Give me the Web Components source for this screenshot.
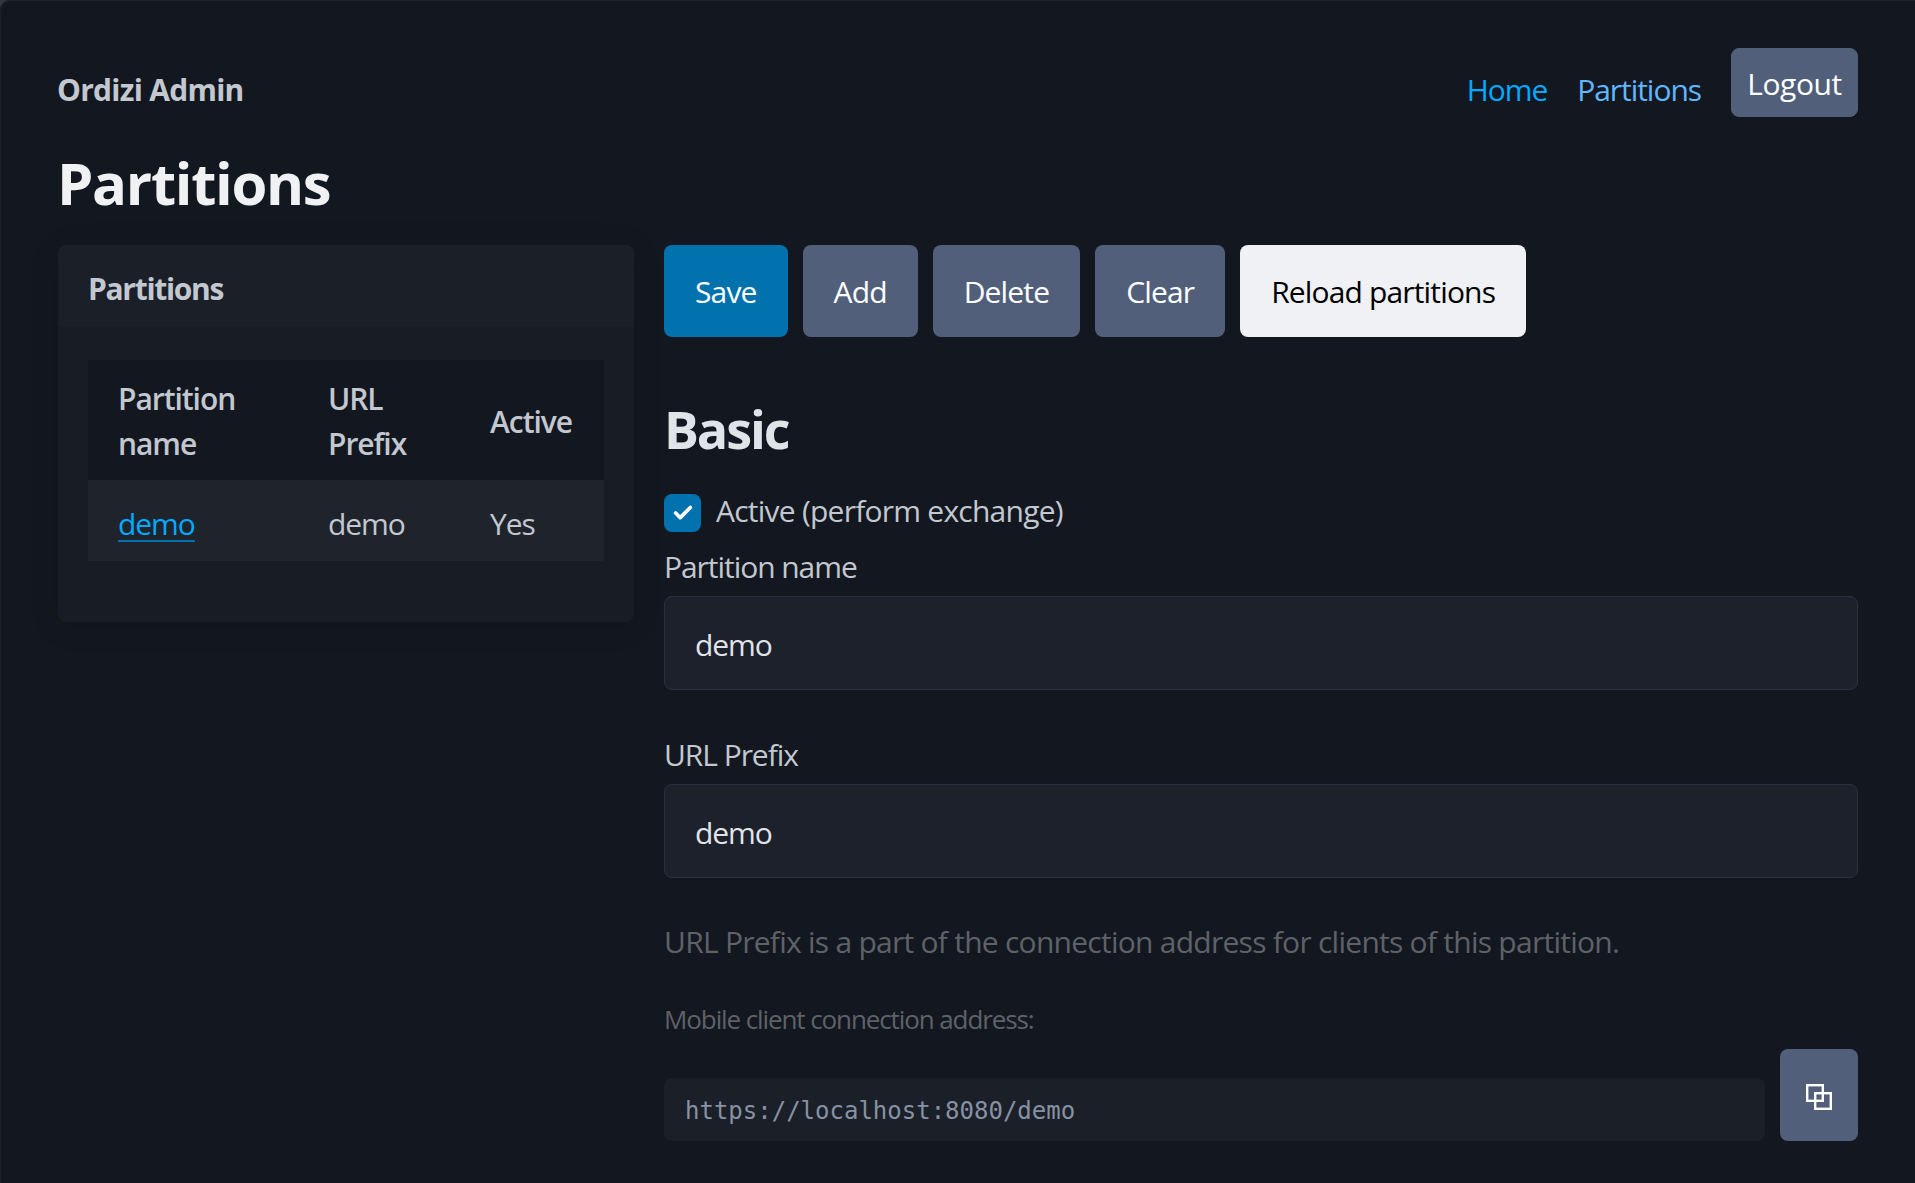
<!DOCTYPE html>
<html lang="en">
<head>
<meta charset="utf-8">
<title>Ordizi Admin</title>
<style>
  html { background: #33363b; }
  body {
    margin: 0;
    font-family: "Open Sans", "Noto Sans", sans-serif;
    font-size: 30px;
    line-height: 45px;
    color: #c2c7d0;
    letter-spacing: -1.05px;
  }
  app-shell {
    display: block;
    min-height: 100vh;
    background: #13171f;
    border-top-left-radius: 10px;
    box-shadow: inset 1px 1px 0 #1c2027;
  }
</style>
</head>
<body>
<app-shell>
  <top-nav brand="Ordizi Admin"></top-nav>
  <page-title>Partitions</page-title>
  <two-cols>
    <side-card slot="side" heading="Partitions">
      <partition-table></partition-table>
    </side-card>
    <div slot="main">
      <action-bar></action-bar>
      <section-title>Basic</section-title>
      <check-row>Active (perform exchange)</check-row>
      <text-field label="Partition name" value="demo"></text-field>
      <text-field label="URL Prefix" value="demo"></text-field>
      <hint-text>URL Prefix is a part of the connection address for clients of this partition.</hint-text>
      <address-row label="Mobile client connection address:" value="https://localhost:8080/demo"></address-row>
    </div>
  </two-cols>
</app-shell>

<script>
const define = (name, html, setup) => {
  customElements.define(name, class extends HTMLElement {
    constructor() {
      super();
      this.attachShadow({ mode: 'open' }).innerHTML = html;
    }
    connectedCallback() {
      if (setup) setup(this, this.shadowRoot);
    }
  });
};

define('app-shell', `<slot></slot>`);

define('top-nav', `
  <style>
    :host { display: flex; align-items: flex-start; justify-content: space-between; height: 157px; padding: 48px 57px 0 57px; box-sizing: border-box; }
    .brand { font-weight: 700; margin-top: 19px; letter-spacing: -0.72px; }
    nav { display: flex; gap: 30px; }
    a { color: #01aaff; text-decoration: none; margin-top: 19px; }
    a.hover { color: #5fb8ff; }
    button {
      font: inherit; letter-spacing: -0.45px; color: #fff; background: #525f7a; border: 1px solid #525f7a;
      border-radius: 8px; height: 69px; width: 127px; padding: 2px 0 0; box-sizing: border-box;
    }
  </style>
  <div class="brand"></div>
  <nav>
    <a href="#">Home</a>
    <a href="#" class="hover">Partitions</a>
    <button type="button">Logout</button>
  </nav>
`, (el, root) => { root.querySelector('.brand').textContent = el.getAttribute('brand'); });

define('page-title', `
  <style>
    :host { display: block; padding-left: 57px; height: 88px; color: #f0f1f3; font-size: 58px; line-height: 52px; font-weight: 700; letter-spacing: -1.3px; }
  </style>
  <slot></slot>
`);

define('two-cols', `
  <style>
    :host { display: grid; grid-template-columns: 576px 1fr; column-gap: 30px; padding: 0 57px 0 58px; }
  </style>
  <slot name="side"></slot>
  <slot name="main"></slot>
`);

define('side-card', `
  <style>
    :host { display: block; align-self: start; height: 377px; background: #181c25; border-radius: 8px; box-shadow: 0 4px 30px rgba(0,0,0,.12); overflow: hidden; }
    header { height: 82px; box-sizing: border-box; padding: 21px 30px 0; background: #1a1f28; font-weight: 700; letter-spacing: -1.3px; }
    .body { padding: 33px 30px 0; }
  </style>
  <header></header>
  <div class="body"><slot></slot></div>
`, (el, root) => { root.querySelector('header').textContent = el.getAttribute('heading'); });

define('partition-table', `
  <style>
    :host { display: block; }
    table { width: 100%; border-collapse: collapse; table-layout: fixed; }
    th, td { text-align: left; padding: 0 0 0 30px; vertical-align: middle; box-sizing: border-box; }
    th { background: #13171f; font-weight: 600; height: 120px; padding-top: 2px; }
    td { background: #1f232c; height: 81px; padding-top: 6px; }
    th:nth-child(1) { width: 210px; }
    th:nth-child(2) { width: 162px; }
    a { color: #01aaff; text-decoration: underline; text-decoration-color: #0172ad; text-underline-offset: 5px; text-decoration-thickness: 2px; }
  </style>
  <table>
    <thead><tr><th>Partition name</th><th>URL Prefix</th><th>Active</th></tr></thead>
    <tbody><tr><td><a href="#">demo</a></td><td>demo</td><td>Yes</td></tr></tbody>
  </table>
`);

define('action-bar', `
  <style>
    :host { display: flex; gap: 15px; height: 92px; margin-bottom: 62px; }
    button {
      font: inherit; letter-spacing: -0.85px; border-radius: 8px; border: 1px solid transparent; height: 92px;
      padding: 0 30px; color: #fff; background: #525f7a; box-sizing: border-box;
    }
    .primary { background: #0172ad; }
    .contrast { background: #eff1f4; color: #000; }
  </style>
  <button type="button" class="primary">Save</button>
  <button type="button">Add</button>
  <button type="button">Delete</button>
  <button type="button">Clear</button>
  <button type="button" class="contrast">Reload partitions</button>
`);

define('section-title', `
  <style>
    :host { display: block; color: #e0e3e7; font-size: 52px; line-height: 60px; font-weight: 700; letter-spacing: -2.1px; margin-bottom: 31px; }
  </style>
  <slot></slot>
`);

define('check-row', `
  <style>
    :host { display: flex; align-items: center; gap: 15px; height: 40px; margin-bottom: 14px; letter-spacing: -0.76px; }
    .box { width: 37px; height: 38px; margin-top: 5px; border-radius: 8px; background: #0172ad; display: flex; align-items: center; justify-content: center; }
    svg { display: block; }
  </style>
  <span class="box">
    <svg width="22" height="22" viewBox="0 0 24 24" fill="none" stroke="#fff" stroke-width="4" stroke-linecap="round" stroke-linejoin="round"><polyline points="20 6 9 17 4 12"/></svg>
  </span>
  <slot></slot>
`);

define('text-field', `
  <style>
    :host { display: block; margin-bottom: 42px; }
    label { display: block; height: 45px; margin-bottom: 7px; }
    .input {
      box-sizing: border-box; height: 94px; padding: 25px 30px 0; background: #1c212c; border: 1px solid #2a3140;
      border-radius: 8px; color: #e0e3e7;
    }
  </style>
  <label></label>
  <div class="input"></div>
`, (el, root) => {
  root.querySelector('label').textContent = el.getAttribute('label');
  root.querySelector('.input').textContent = el.getAttribute('value');
});

define('hint-text', `
  <style>
    :host { display: block; color: #5e6268; margin-top: -1px; margin-bottom: 36px; letter-spacing: -0.74px; }
  </style>
  <slot></slot>
`);

define('address-row', `
  <style>
    :host { display: block; }
    .label { color: #5e6268; font-size: 26px; line-height: 38px; letter-spacing: -1.1px; margin-bottom: 11px; }
    .row { display: flex; align-items: flex-end; gap: 15px; }
    code {
      flex: 1; box-sizing: border-box; height: 63px; padding: 14px 21px; background: #1a1f28; color: #8891a4;
      border-radius: 8px; font-family: "DejaVu Sans Mono", monospace; font-size: 24px; line-height: 38px; letter-spacing: 0;
    }
    button { width: 78px; height: 92px; border: 0; border-radius: 8px; background: #525f7a; padding: 3px 0 0; display: flex; align-items: center; justify-content: center; }
    svg { display: block; }
  </style>
  <div class="label"></div>
  <div class="row">
    <code></code>
    <button type="button" aria-label="Copy">
      <svg width="26" height="26" viewBox="0 0 26 26" fill="none" stroke="#fff" stroke-width="2.4"><rect x="1.2" y="1.2" width="15.6" height="15.6"/><rect x="9.2" y="9.2" width="15.6" height="15.6"/></svg>
    </button>
  </div>
`, (el, root) => {
  root.querySelector('.label').textContent = el.getAttribute('label');
  root.querySelector('code').textContent = el.getAttribute('value');
});
</script>
</body>
</html>
